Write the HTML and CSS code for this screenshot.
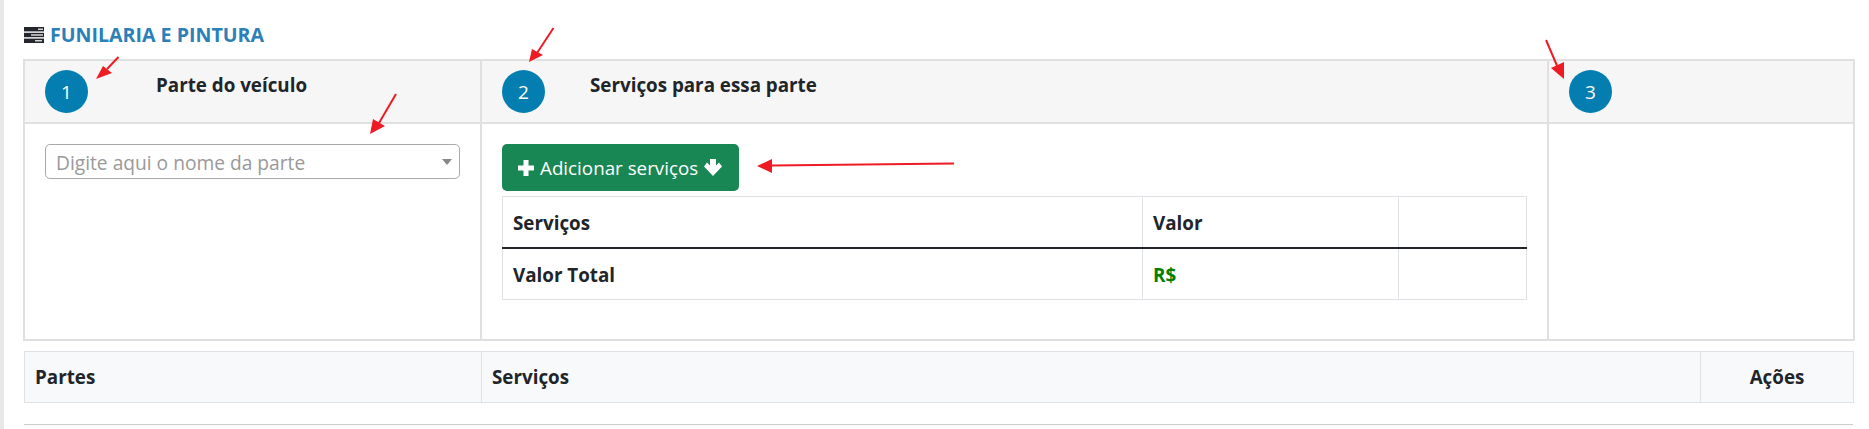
FILE: index.html
```html
<!DOCTYPE html>
<html lang="pt">
<head>
<meta charset="utf-8">
<title>Funilaria e Pintura</title>
<link rel="stylesheet" href="styles.css">
</head>
<body>
<main class="page">
  <h2 class="section-title">
    <svg class="title-icon" viewBox="0 0 20 16" aria-hidden="true">
      <rect x="0" y="0" width="20" height="4.4" fill="#23272d"/>
      <rect x="0" y="5.8" width="20" height="4.4" fill="#23272d"/>
      <rect x="0" y="11.6" width="20" height="4.4" fill="#23272d"/>
      <rect x="14" y="1.6" width="5" height="1.2" fill="#fff"/>
      <rect x="7" y="7.4" width="12" height="1.2" fill="#fff"/>
      <rect x="11" y="13.2" width="7" height="1.2" fill="#fff"/>
    </svg>
    FUNILARIA E PINTURA
  </h2>

  <table class="steps">
    <colgroup><col class="c-part"><col class="c-serv"><col class="c-extra"></colgroup>
    <thead>
      <tr>
        <th><div class="step-head"><span class="badge">1</span><span class="step-title t1">Parte do veículo</span></div></th>
        <th><div class="step-head"><span class="badge">2</span><span class="step-title t2">Serviços para essa parte</span></div></th>
        <th><div class="step-head"><span class="badge">3</span></div></th>
      </tr>
    </thead>
    <tbody>
      <tr>
        <td>
          <div class="select">
            <span class="placeholder">Digite aqui o nome da parte</span>
            <span class="caret"></span>
          </div>
        </td>
        <td>
          <button class="btn-add" type="button">
            <svg class="icon-plus" viewBox="0 0 16 16" aria-hidden="true"><polygon fill="#fff" points="5.5,0 10.5,0 10.5,5.5 16,5.5 16,10.5 10.5,10.5 10.5,16 5.5,16 5.5,10.5 0,10.5 0,5.5 5.5,5.5"/></svg>
            <span>Adicionar serviços</span>
            <svg class="icon-down" viewBox="0 0 18 17" aria-hidden="true"><polygon fill="#fff" points="6,0 12,0 12,6.5 15,3.5 18,7.5 9,17 0,7.5 3,3.5 6,6.5"/></svg>
          </button>
          <table class="services">
            <colgroup><col class="s-name"><col class="s-value"><col class="s-act"></colgroup>
            <thead><tr><th>Serviços</th><th>Valor</th><th></th></tr></thead>
            <tbody><tr><th>Valor Total</th><th class="money">R$</th><th></th></tr></tbody>
          </table>
        </td>
        <td></td>
      </tr>
    </tbody>
  </table>

  <table class="list">
    <colgroup><col class="l-part"><col class="l-serv"><col class="l-act"></colgroup>
    <thead><tr><th>Partes</th><th>Serviços</th><th class="center">Ações</th></tr></thead>
  </table>

  <hr class="rule">
</main>

<svg class="annotations" viewBox="0 0 1869 429" aria-hidden="true">
  <g fill="#ed1c24" stroke="#ed1c24">
    <line x1="118.5" y1="57" x2="107" y2="69" stroke-width="2"/>
    <polygon points="96,79 103,66 112,73" stroke="none"/>
    <line x1="553.5" y1="28" x2="537" y2="53" stroke-width="2"/>
    <polygon points="529,62 532,49 543,55" stroke="none"/>
    <line x1="396" y1="94" x2="379" y2="123" stroke-width="2"/>
    <polygon points="370,134 373,119 385,126" stroke="none"/>
    <line x1="954" y1="163.5" x2="772" y2="165.5" stroke-width="2"/>
    <polygon points="757,166 772,159 772,173" stroke="none"/>
    <line x1="1546" y1="40" x2="1558" y2="68" stroke-width="2"/>
    <polygon points="1564,79 1551,68 1564,62" stroke="none"/>
  </g>
</svg>
</body>
</html>
```

FILE: styles.css
```css
* { box-sizing: border-box; }
html, body { margin: 0; padding: 0; background: #fff; }
body {
  position: relative;
  width: 1869px;
  height: 429px;
  overflow: hidden;
  font-family: "Open Sans", "Noto Sans", sans-serif;
  color: #212529;
}
.page {
  height: 429px;
  border-left: 4px solid #e8e8e8;
  padding: 26px 16px 0 20px;
}
.section-title {
  margin: 0 0 16px;
  height: 17px;
  display: flex;
  align-items: center;
  gap: 6px;
  font-size: 19.6px;
  font-weight: 700;
  line-height: 17px;
  color: #2b80b9;
}
.title-icon { width: 20px; height: 16px; flex: none; }

table { border-collapse: collapse; table-layout: fixed; }

.steps { width: 1830px; height: 282px; margin-left: -1px; }
.c-part { width: 457px; }
.c-serv { width: 1067px; }
.c-extra { width: 306px; }
.steps > thead > tr > th {
  height: 63px;
  padding: 0;
  background: #f6f6f6;
  border: 2px solid #e0e0e0;
  vertical-align: top;
}
.steps > tbody > tr > td {
  border: 2px solid #e0e0e0;
  padding: 20px;
  vertical-align: top;
}
.step-head {
  display: flex;
  align-items: flex-start;
  padding: 9px 20px 0;
}
.badge {
  flex: none;
  width: 43px;
  height: 43px;
  border-radius: 50%;
  background: #047db0;
  color: #fff;
  font-size: 19px;
  font-weight: 400;
  line-height: 44px;
  text-align: center;
}
.step-title {
  font-size: 18.8px;
  font-weight: 700;
  line-height: 24px;
  margin-top: 3px;
}
.t1 { margin-left: 68px; }
.t2 { margin-left: 45px; }

.select {
  position: relative;
  width: 415px;
  height: 35px;
  border: 1px solid #aaa;
  border-radius: 5px;
  background: #fff;
  padding-left: 10px;
  line-height: 35px;
  font-size: 19.2px;
  color: #999;
}
.caret {
  position: absolute;
  top: 14px;
  right: 7px;
  border-style: solid;
  border-width: 6px 5px 0;
  border-color: #888 transparent transparent;
}

.btn-add {
  display: flex;
  align-items: center;
  width: 237px;
  height: 47px;
  padding: 0 0 0 16px;
  gap: 6px;
  border: 0;
  border-radius: 5px;
  background: #198754;
  color: #fff;
  font-family: inherit;
  font-size: 18.8px;
}
.icon-plus { width: 16px; height: 16px; flex: none; }
.icon-down { width: 18px; height: 17px; flex: none; }

.services { width: 1024px; margin-top: 5px; }
.s-name { width: 640px; }
.s-value { width: 256px; }
.s-act { width: 128px; }
.services th {
  border: 1px solid #dee2e6;
  padding: 2px 10px 0;
  font-size: 18.8px;
  font-weight: 700;
  text-align: left;
  height: 51px;
}
.services thead th { border-bottom: 2px solid #212529; }
.services tbody th { height: 52px; padding-top: 3px; }
.money { color: #008000; }

.list { width: 1829px; margin-top: 10px; }
.l-part { width: 457px; }
.l-serv { width: 1219px; }
.l-act { width: 153px; }
.list th {
  height: 51px;
  border: 1.5px solid #dee2e6;
  background: #f8f9fa;
  padding: 0 10px;
  font-size: 18.8px;
  font-weight: 700;
  text-align: left;
}
.list th.center { text-align: center; }

.rule {
  margin: 21px 0 0;
  border: 0;
  border-top: 1px solid #ccc;
}

.annotations {
  position: absolute;
  left: 0;
  top: 0;
  width: 1869px;
  height: 429px;
  pointer-events: none;
}
```
